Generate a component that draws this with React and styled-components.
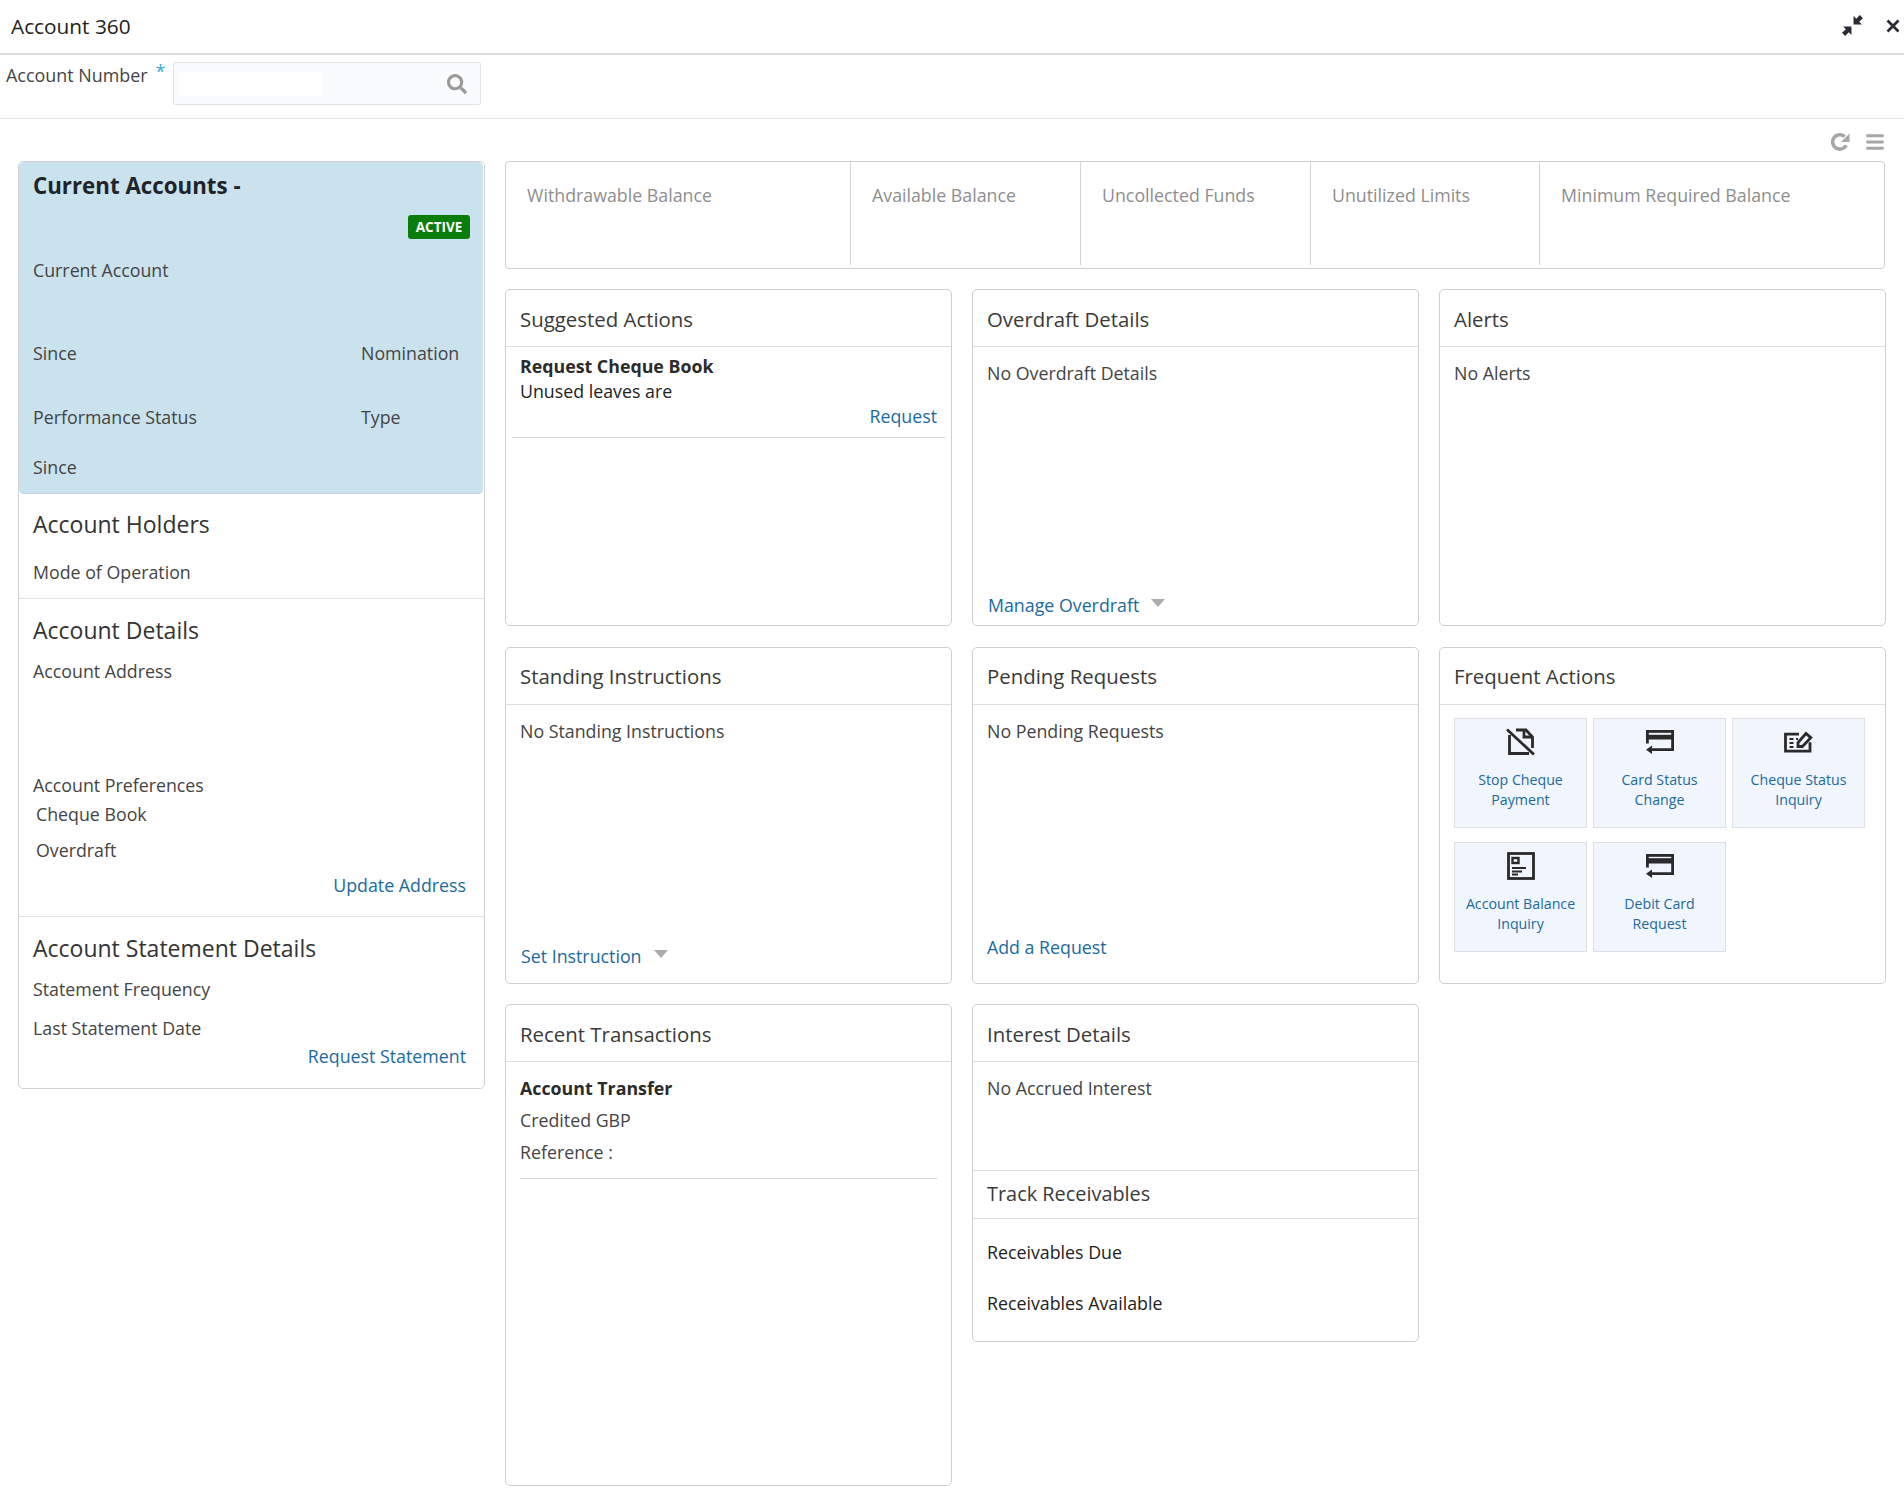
import styled, { createGlobalStyle } from "styled-components";
import { FaBars, FaSearch } from "react-icons/fa";

const GlobalStyle = createGlobalStyle`
  body {
    margin: 0;
    background: #fff;
    font-family: "Open Sans", "Noto Sans", sans-serif;
    color: #444;
  }
  * {
    box-sizing: border-box;
  }
`;

const link = "#1b6a9c";

const TopBar = styled.header`
  height: 55px;
  border-bottom: 2px solid #dcdcdc;
  display: flex;
  align-items: center;
  justify-content: space-between;
  padding: 0 4px 2px 11px;
`;

const PageTitle = styled.h1`
  margin: 0;
  font-size: 20.8px;
  font-weight: 400;
  color: #222;
`;

const WindowIcons = styled.div`
  display: flex;
  align-items: center;
  gap: 22px;
  color: #2b2b33;
`;

const SearchRow = styled.div`
  height: 64px;
  border-bottom: 1px solid #e2e2e2;
  display: flex;
  align-items: flex-start;
  padding: 7px 0 0 6px;
`;

const FieldLabel = styled.label`
  font-size: 17.9px;
  line-height: 26px;
  color: #444;
`;

const Star = styled.span`
  color: #3ba6db;
  font-size: 18px;
  line-height: 18px;
  margin: 0 8px;
  width: 9px;
`;

const SearchBox = styled.div`
  width: 308px;
  height: 43px;
  background: #fafbfd;
  border: 1px solid #e4e4e8;
  border-radius: 2px;
  display: flex;
  align-items: center;
  justify-content: space-between;
  padding: 0 13px 0 5px;
  color: #9a9a9a;
`;

const SearchInput = styled.input`
  width: 144px;
  height: 24px;
  border: 0;
  background: #fff;
`;

const Tools = styled.div`
  height: 42px;
  display: flex;
  align-items: center;
  justify-content: flex-end;
  gap: 15px;
  padding: 4px 19px 0 0;
  color: #a6a6a6;
`;

const Main = styled.main`
  display: grid;
  grid-template-columns: 467px 1380px;
  gap: 20px;
  padding-left: 18px;
  align-items: start;
`;

const SideCard = styled.aside`
  border: 1px solid #cfd2d4;
  border-radius: 5px;
`;

const Summary = styled.div`
  background: #c9e2ee;
  border-radius: 5px;
  border-bottom: 1px solid #bcd2de;
  margin-right: 1px;
  padding: 9px 13px 14px 14px;
`;

const SummaryTitle = styled.div`
  font-size: 22.3px;
  line-height: 30px;
  font-weight: 700;
  color: #1f2428;
`;

const Badge = styled.div`
  width: 62px;
  height: 24px;
  margin: 14px 0 0 auto;
  background: #0a7d0a;
  border-radius: 3px;
  color: #fff;
  font-size: 13.5px;
  font-weight: 700;
  line-height: 24px;
  text-align: center;
`;

const Line = styled.div`
  font-size: 17.8px;
  line-height: 24px;
  margin-top: ${(p) => p.$mt || 0}px;
  padding-left: ${(p) => p.$indent || 0}px;
  color: ${(p) => p.$color || "#444"};
  font-weight: ${(p) => (p.$bold ? 700 : 400)};
  white-space: nowrap;
`;

const Pair = styled(Line)`
  display: grid;
  grid-template-columns: 328px 1fr;
`;

const SideSection = styled.section`
  padding: ${(p) => p.$pt}px 18px ${(p) => p.$pb}px 14px;
  border-bottom: ${(p) => (p.$last ? "0" : "1px solid #e2e2e2")};
`;

const SideTitle = styled.h2`
  margin: 0;
  font-size: 23px;
  line-height: 30px;
  font-weight: 400;
  color: #333;
`;

const ActionLink = styled.a`
  display: block;
  font-size: 17.8px;
  line-height: 24px;
  margin-top: ${(p) => p.$mt || 0}px;
  text-align: right;
  color: ${link};
`;

const Content = styled.div`
  min-width: 0;
`;

const Balances = styled.div`
  height: 108px;
  margin-bottom: 20px;
  border: 1px solid #cfcfcf;
  border-radius: 4px;
  display: grid;
  grid-template-columns: 344px 230px 230px 229px 1fr;
`;

const Balance = styled.div`
  padding: 21px 0 0 21px;
  font-size: 17.8px;
  line-height: 24px;
  color: #8e8e8e;
  margin-bottom: 3px;
  & + & {
    border-left: 1px solid #d4d4d4;
  }
`;

const CardGrid = styled.div`
  display: grid;
  grid-template-columns: repeat(3, 447px);
  gap: 20.5px 20px;
  align-items: start;
`;

const Card = styled.section`
  height: ${(p) => p.$h}px;
  border: 1px solid #cfcfcf;
  border-radius: 5px;
  display: flex;
  flex-direction: column;
`;

const CardHeader = styled.h3`
  margin: 0;
  flex: none;
  height: 57px;
  border-bottom: 1px solid #dedede;
  padding: 1px 14px 0;
  display: flex;
  align-items: center;
  font-size: 20.4px;
  font-weight: 400;
  color: #3a3a3a;
`;

const CardBody = styled.div`
  flex: ${(p) => (p.$height ? "none" : 1)};
  height: ${(p) => (p.$height ? `${p.$height}px` : "auto")};
  display: flex;
  flex-direction: column;
  padding: ${(p) => p.$pt ?? 14}px 14px ${(p) => p.$pb ?? 0}px;
`;

const Divider = styled.div`
  flex: none;
  height: 1px;
  margin: ${(p) => p.$mt}px ${(p) => p.$bleed || 0}px 0;
  background: #d6d6d6;
`;

const CardFooter = styled.a`
  margin-top: auto;
  display: flex;
  align-items: center;
  gap: 12px;
  padding-left: ${(p) => p.$indent || 0}px;
  font-size: 17.8px;
  line-height: 24px;
  color: ${link};
`;

const Caret = styled.span`
  width: 0;
  height: 0;
  border-left: 7px solid transparent;
  border-right: 7px solid transparent;
  border-top: 8px solid #acacac;
  margin-top: -4px;
`;

const TileGrid = styled.div`
  display: grid;
  grid-template-columns: repeat(3, 133px);
  gap: 14px 6px;
  padding: 13px 0 0 14px;
`;

const Tile = styled.a`
  height: 110px;
  background: #f1f5fd;
  border: 1px solid #dddfe3;
  display: flex;
  flex-direction: column;
  align-items: center;
  color: ${link};
  font-size: 14.2px;
  line-height: 20px;
  text-align: center;
`;

const TileIcon = styled.div`
  height: 28px;
  margin: 9px 0 14px;
  display: flex;
  align-items: center;
  justify-content: center;
  color: #2a2a2a;
`;

const TrackHeader = styled.h3`
  margin: 0;
  flex: none;
  height: 49px;
  border-top: 1px solid #dedede;
  border-bottom: 1px solid #dedede;
  padding: 0 14px 2px;
  display: flex;
  align-items: center;
  font-size: 19.9px;
  font-weight: 400;
  color: #3a3a3a;
`;

const CompressIcon = () => (
  <svg width="23" height="23" viewBox="0 0 22 22" fill="currentColor">
    <path d="M12 10V2l2.6 2.6L18 1l3 3-3.6 3.4L20 10z" />
    <path d="M10 12v8l-2.6-2.6L4 21l-3-3 3.6-3.4L2 12z" />
  </svg>
);

const CloseIcon = () => (
  <svg width="14" height="14" viewBox="0 0 14 14" stroke="currentColor" strokeWidth="2.8" fill="none">
    <path d="M1.5 1.5l11 11M12.5 1.5l-11 11" />
  </svg>
);

const RefreshIcon = () => (
  <svg width="20" height="20" viewBox="0 0 20 20">
    <path d="M16.2 13.2A7.2 7.2 0 1 1 14.6 4.6" fill="none" stroke="currentColor" strokeWidth="3.6" />
    <path d="M19.5 1.5v8.5H11z" fill="currentColor" />
  </svg>
);

const StopIcon = () => (
  <svg width="29" height="28" viewBox="0 0 29 28" fill="none" stroke="currentColor" strokeWidth="2.8">
    <path d="M3.5 7v18.5H23" />
    <path d="M10 2h10l6.5 7v11" />
    <path d="M18 2v7h8" />
    <path d="M1 1.5l27 25" />
  </svg>
);

const CardIcon = ({ wide }) => (
  <svg width="28" height="24" viewBox="0 0 28 24" fill="currentColor">
    <path d="M0 0h28v21H5v-2.8h20.2V9.4H2.8v4H0z" />
    <path d={wide ? "M2.8 2.8h22.4v1.4H2.8z" : "M2.8 2.8h22.4v2H2.8z"} fill="#f1f5fd" />
    <path d="M6 15.5V24L0 19.8z" />
  </svg>
);

const ChequeIcon = () => (
  <svg width="29" height="22" viewBox="0 0 29 22" fill="none" stroke="currentColor" strokeWidth="2.8">
    <path d="M15 3.2H1.5v17h24.5v-9" />
    <path d="M5.5 8h4M5.5 12h4M5.5 16h4M12 8h2" strokeWidth="2" />
    <path d="M14 15.5v-4L22 2.5l4.8 4.2-8.4 8.8z" />
  </svg>
);

const BalanceIcon = () => (
  <svg width="28" height="28" viewBox="0 0 28 28" fill="none" stroke="currentColor">
    <rect x="1.5" y="1.5" width="25" height="25" strokeWidth="2.8" />
    <rect x="5.5" y="6" width="6" height="5" strokeWidth="2.4" />
    <path d="M5 16h14M5 19.5h10M5 22.5h6" strokeWidth="2" />
  </svg>
);

const balances = [
  "Withdrawable Balance",
  "Available Balance",
  "Uncollected Funds",
  "Unutilized Limits",
  "Minimum Required Balance",
];

const tiles = [
  { icon: <StopIcon />, top: "Stop Cheque", bottom: "Payment" },
  { icon: <CardIcon />, top: "Card Status", bottom: "Change" },
  { icon: <ChequeIcon />, top: "Cheque Status", bottom: "Inquiry" },
  { icon: <BalanceIcon />, top: "Account Balance", bottom: "Inquiry" },
  { icon: <CardIcon wide />, top: "Debit Card", bottom: "Request" },
];

export default function App() {
  return (
    <>
      <GlobalStyle />
      <TopBar>
        <PageTitle>Account 360</PageTitle>
        <WindowIcons>
          <CompressIcon />
          <CloseIcon />
        </WindowIcons>
      </TopBar>
      <SearchRow>
        <FieldLabel>Account Number</FieldLabel>
        <Star>*</Star>
        <SearchBox>
          <SearchInput aria-label="Account Number" />
          <FaSearch size={20} />
        </SearchBox>
      </SearchRow>
      <Tools>
        <RefreshIcon />
        <FaBars size={20} />
      </Tools>
      <Main>
        <SideCard>
          <Summary>
            <SummaryTitle>Current Accounts -</SummaryTitle>
            <Badge>ACTIVE</Badge>
            <Line $mt={19}>Current Account</Line>
            <Pair $mt={59}>
              <span>Since</span>
              <span>Nomination</span>
            </Pair>
            <Pair $mt={40}>
              <span>Performance Status</span>
              <span>Type</span>
            </Pair>
            <Line $mt={26}>Since</Line>
          </Summary>
          <SideSection $pt={15} $pb={14}>
            <SideTitle>Account Holders</SideTitle>
            <Line $mt={21}>Mode of Operation</Line>
          </SideSection>
          <SideSection $pt={16} $pb={19}>
            <SideTitle>Account Details</SideTitle>
            <Line $mt={14}>Account Address</Line>
            <Line $mt={90}>Account Preferences</Line>
            <Line $mt={5} $indent={3}>Cheque Book</Line>
            <Line $mt={12} $indent={3}>Overdraft</Line>
            <ActionLink $mt={11}>Update Address</ActionLink>
          </SideSection>
          <SideSection $pt={16} $pb={20} $last>
            <SideTitle>Account Statement Details</SideTitle>
            <Line $mt={14}>Statement Frequency</Line>
            <Line $mt={15}>Last Statement Date</Line>
            <ActionLink $mt={4}>Request Statement</ActionLink>
          </SideSection>
        </SideCard>
        <Content>
          <Balances>
            {balances.map((name) => (
              <Balance key={name}>{name}</Balance>
            ))}
          </Balances>
          <CardGrid>
            <Card $h={337}>
              <CardHeader>Suggested Actions</CardHeader>
              <CardBody $pt={7}>
                <Line $bold $color="#2b2b2b">Request Cheque Book</Line>
                <Line $mt={1} $color="#222">Unused leaves are</Line>
                <ActionLink $mt={1}>Request</ActionLink>
                <Divider $mt={9} $bleed={-8} />
              </CardBody>
            </Card>
            <Card $h={337}>
              <CardHeader>Overdraft Details</CardHeader>
              <CardBody $pb={8}>
                <Line>No Overdraft Details</Line>
                <CardFooter $indent={1}>
                  Manage Overdraft <Caret />
                </CardFooter>
              </CardBody>
            </Card>
            <Card $h={337}>
              <CardHeader>Alerts</CardHeader>
              <CardBody>
                <Line>No Alerts</Line>
              </CardBody>
            </Card>
            <Card $h={337}>
              <CardHeader>Standing Instructions</CardHeader>
              <CardBody $pb={15}>
                <Line>No Standing Instructions</Line>
                <CardFooter $indent={1}>
                  Set Instruction <Caret />
                </CardFooter>
              </CardBody>
            </Card>
            <Card $h={337}>
              <CardHeader>Pending Requests</CardHeader>
              <CardBody $pb={24}>
                <Line>No Pending Requests</Line>
                <CardFooter>Add a Request</CardFooter>
              </CardBody>
            </Card>
            <Card $h={337}>
              <CardHeader>Frequent Actions</CardHeader>
              <TileGrid>
                {tiles.map((tile) => (
                  <Tile key={tile.top}>
                    <TileIcon>{tile.icon}</TileIcon>
                    <span>{tile.top}</span>
                    <span>{tile.bottom}</span>
                  </Tile>
                ))}
              </TileGrid>
            </Card>
            <Card $h={482}>
              <CardHeader>Recent Transactions</CardHeader>
              <CardBody>
                <Line $bold $color="#2b2b2b">Account Transfer</Line>
                <Line $mt={8}>Credited GBP</Line>
                <Line $mt={8}>Reference :</Line>
                <Divider $mt={14} />
              </CardBody>
            </Card>
            <Card $h={338}>
              <CardHeader>Interest Details</CardHeader>
              <CardBody $height={108}>
                <Line>No Accrued Interest</Line>
              </CardBody>
              <TrackHeader>Track Receivables</TrackHeader>
              <CardBody $pt={21} $pb={20}>
                <Line $color="#222">Receivables Due</Line>
                <Line $mt={27} $color="#222">Receivables Available</Line>
              </CardBody>
            </Card>
          </CardGrid>
        </Content>
      </Main>
    </>
  );
}
